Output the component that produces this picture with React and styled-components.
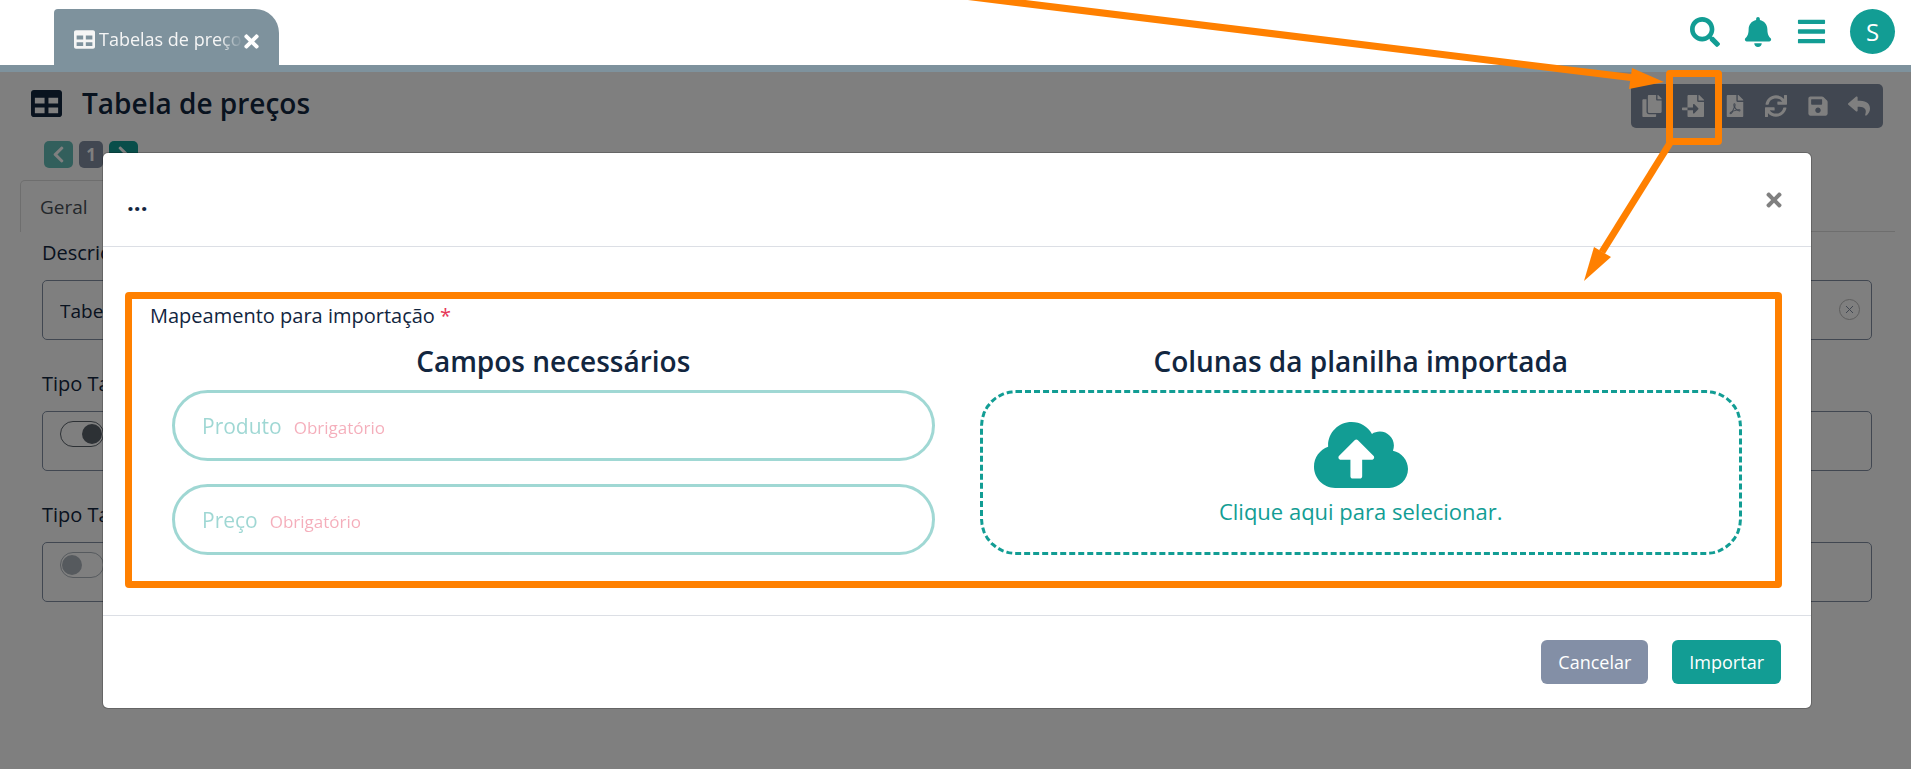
import React from "react";
import styled, { createGlobalStyle } from "styled-components";
import {
  FaTable, FaSearch, FaBell, FaBars, FaCopy, FaFileImport, FaFilePdf,
  FaSync, FaSave, FaReply, FaCloudUploadAlt, FaTimes, FaChevronLeft, FaChevronRight,
} from "react-icons/fa";

const teal = "#129d94";
const slate = "#838fa6";
const ink = "#12263f";
const bar = "#7e929d";
const orange = "#ff8000";

const GlobalStyle = createGlobalStyle`
  * { box-sizing: border-box; }
  body {
    margin: 0;
    background: #fff;
    color: ${ink};
    font-family: "Open Sans", "Noto Sans", sans-serif;
    font-size: 19px;
  }
  h1, h2, p { margin: 0; }
  button, input { font: inherit; color: inherit; }
  button { border: 0; padding: 0; background: none; cursor: pointer; }
  svg { display: block; }
`;

const Page = styled.div`
  position: relative;
  min-height: 100vh;
  display: flex;
  flex-direction: column;
  overflow: hidden;
`;

const Header = styled.header`
  display: flex;
  align-items: flex-end;
  justify-content: space-between;
  height: 72px;
  padding: 0 16px 0 54px;
  border-bottom: 7px solid ${bar};
`;

const WindowTab = styled.div`
  display: flex;
  align-items: center;
  width: 225px;
  height: 56px;
  padding: 4px 17px 0 20px;
  border-radius: 4px 24px 0 0;
  background: ${bar};
  color: #f5f5f5;
`;

const TabName = styled.span`
  flex: 1;
  min-width: 0;
  margin-left: 4px;
  overflow: hidden;
  white-space: nowrap;
  font-size: 18px;
  line-height: 28px;
  mask-image: linear-gradient(to right, #000 120px, transparent 144px);
`;

const TabClose = styled.button`
  margin-top: 4px;
  color: #fff;
`;

const HeaderActions = styled.div`
  display: flex;
  align-items: center;
  gap: 23px;
  height: 45px;
  margin-bottom: 11px;
`;

const HeaderIcon = styled.button`
  color: ${teal};

  svg {
    width: auto;
  }
`;

const Avatar = styled.button`
  width: 45px;
  height: 45px;
  border-radius: 50%;
  background: ${teal};
  color: #fff;
  font-size: 24px;
`;

const Main = styled.main`
  position: relative;
  flex: 1;
  padding: 12px 16px 32px 20px;
`;

const TitleRow = styled.div`
  display: flex;
  align-items: flex-start;
  justify-content: space-between;
  padding: 0 12px 0 11px;
`;

const PageTitle = styled.h1`
  display: flex;
  align-items: center;
  gap: 20px;
  font-size: 28px;
  line-height: 38px;
  font-weight: 600;
`;

const Toolbar = styled.div`
  display: flex;
  width: 252px;
  height: 44px;
  padding-right: 3px;
  border-radius: 5px;
  background: #828fa3;
`;

const Tool = styled.button`
  flex: 1;
  display: flex;
  align-items: center;
  justify-content: center;
  color: #fff;
`;

const Pager = styled.nav`
  display: flex;
  gap: 6px;
  margin: 13px 0 12px 24px;
`;

const PagerButton = styled.button`
  display: flex;
  align-items: center;
  justify-content: center;
  width: ${(p) => (p.$current ? 24 : 29)}px;
  height: 27px;
  border-radius: 5px;
  background: ${(p) => (p.$current ? "#828fa3" : teal)};
  color: #fff;
  font-size: 17px;
  font-weight: 700;
  opacity: ${(p) => (p.disabled ? 0.65 : 1)};
`;

const Tabs = styled.div`
  display: flex;
  height: 52px;

  &::after {
    content: "";
    flex: 1;
    border-bottom: 1px solid #ddd;
  }
`;

const FormTab = styled.button`
  padding: 0 19px;
  border: 1px solid #ddd;
  border-bottom: 0;
  border-radius: 5px 5px 0 0;
  color: #495057;
`;

const Form = styled.form`
  display: grid;
  gap: 29px;
  padding: 6px 23px 0 22px;
`;

const Field = styled.div`
  display: grid;
  gap: 12px;
`;

const FieldLabel = styled.label`
  font-size: 20px;
  line-height: 30px;
`;

const FieldBox = styled.div`
  display: flex;
  align-items: flex-start;
  height: 60px;
  padding: 9px 11px 0 17px;
  border: 1px solid #828fa3;
  border-radius: 5px;
`;

const TextInput = styled.input`
  flex: 1;
  height: 42px;
  padding: 0;
  border: 0;
  outline: 0;
  background: none;
`;

const ClearButton = styled.button`
  display: flex;
  align-items: center;
  justify-content: center;
  width: 21px;
  height: 21px;
  margin-top: 9px;
  border: 1px solid #bbb;
  border-radius: 50%;
  color: #828fa3;
`;

const ClearMark = styled.svg`
  width: 7px;
  height: 7px;
  stroke: currentColor;
`;

const Switch = styled.input`
  appearance: none;
  display: flex;
  align-items: center;
  justify-content: ${(p) => (p.defaultChecked ? "flex-end" : "flex-start")};
  width: 44px;
  height: 26px;
  margin: 0;
  padding: 0 1px;
  border: 1px solid ${(p) => (p.defaultChecked ? "#5a626b" : "#adb5bd")};
  border-radius: 13px;

  &::before {
    content: "";
    width: 20px;
    height: 20px;
    border-radius: 50%;
    background: ${(p) => (p.defaultChecked ? "#5a626b" : "#adb5bd")};
  }
`;

const Overlay = styled.div`
  position: absolute;
  inset: 0;
  padding: 80px 99px 0 102px;
  background: rgba(0, 0, 0, 0.5);
`;

const Modal = styled.section`
  border: 1px solid rgba(0, 0, 0, 0.2);
  border-radius: 6px;
  background: #fff;
  background-clip: padding-box;
`;

const ModalHeader = styled.div`
  display: flex;
  align-items: center;
  justify-content: space-between;
  height: 94px;
  padding: 0 26px 0 24px;
  border-bottom: 1px solid #dcdfe5;
`;

const ModalTitle = styled.h2`
  padding-top: 4px;
  font-size: 24px;
  line-height: 32px;
  font-weight: 700;
`;

const CloseButton = styled.button`
  color: #808080;
`;

const ModalBody = styled.div`
  padding: 45px 29px 27px 22px;
`;

const Mapping = styled.div`
  padding: 2px 33px 26px 40px;
  border: 7px solid ${orange};
  border-radius: 4px;
`;

const MappingLabel = styled.p`
  margin-left: -22px;
  font-size: 20px;
  line-height: 30px;
`;

const Required = styled.span`
  color: #e63757;
`;

const Columns = styled.div`
  display: grid;
  grid-template-columns: 1fr 1fr;
  gap: 45px;
  margin-top: 12px;
`;

const Column = styled.div`
  display: flex;
  flex-direction: column;
`;

const ColumnTitle = styled.h2`
  margin-bottom: 11px;
  font-size: 28px;
  line-height: 36px;
  font-weight: 600;
  text-align: center;
`;

const PillList = styled.div`
  display: grid;
  gap: 23px;
`;

const Pill = styled.div`
  display: flex;
  align-items: baseline;
  gap: 12px;
  height: 71px;
  padding: 18px 27px 16px;
  border: 3px solid ${teal};
  border-radius: 36px;
  color: ${teal};
  font-size: 21px;
  line-height: 30px;
  opacity: 0.4;
`;

const PillNote = styled.span`
  color: #e63757;
  font-size: 17px;
`;

const DropZone = styled.button`
  flex: 1;
  display: flex;
  flex-direction: column;
  align-items: center;
  justify-content: center;
  padding-bottom: 12px;
  border: 3px dashed ${teal};
  border-radius: 36px;
  color: ${teal};
  font-size: 22px;
  line-height: 30px;

  svg {
    margin-bottom: -6px;
  }
`;

const ModalFooter = styled.div`
  display: flex;
  justify-content: flex-end;
  gap: 24px;
  padding: 24px 30px 24px 24px;
  border-top: 1px solid #dcdfe5;
`;

const ActionButton = styled.button`
  height: 44px;
  padding: 0 17px;
  border-radius: 6px;
  background: ${(p) => (p.$primary ? teal : slate)};
  color: #fff;
  font-size: 18px;
`;

const Arrows = styled.svg`
  position: absolute;
  top: 0;
  right: 0;
  pointer-events: none;
`;

const Callout = styled.div`
  position: absolute;
  top: 70px;
  right: 189px;
  width: 56px;
  height: 75px;
  border: 7px solid ${orange};
  border-radius: 4px;
  pointer-events: none;
`;

const tools = [
  ["Copiar", FaCopy],
  ["Importar planilha", FaFileImport],
  ["Gerar PDF", FaFilePdf],
  ["Atualizar", FaSync],
  ["Salvar", FaSave],
  ["Voltar", FaReply],
];

const requiredFields = ["Produto", "Preço"];

export default function App() {
  return (
    <Page>
      <GlobalStyle />
      <Header>
        <WindowTab>
          <FaTable size={21} />
          <TabName>Tabelas de preços</TabName>
          <TabClose aria-label="Fechar aba"><FaTimes size={21} /></TabClose>
        </WindowTab>
        <HeaderActions>
          <HeaderIcon aria-label="Buscar"><FaSearch size={30} /></HeaderIcon>
          <HeaderIcon aria-label="Notificações"><FaBell size={30} /></HeaderIcon>
          <HeaderIcon aria-label="Menu"><FaBars size={31} /></HeaderIcon>
          <Avatar aria-label="Perfil">S</Avatar>
        </HeaderActions>
      </Header>

      <Main>
        <TitleRow>
          <PageTitle><FaTable size={31} />Tabela de preços</PageTitle>
          <Toolbar>
            {tools.map(([name, Icon]) => (
              <Tool key={name} aria-label={name}><Icon size={22} /></Tool>
            ))}
          </Toolbar>
        </TitleRow>
        <Pager aria-label="Páginas">
          <PagerButton disabled aria-label="Anterior"><FaChevronLeft size={19} /></PagerButton>
          <PagerButton $current>1</PagerButton>
          <PagerButton aria-label="Próxima"><FaChevronRight size={19} /></PagerButton>
        </Pager>
        <Tabs><FormTab>Geral</FormTab></Tabs>
        <Form>
          <Field>
            <FieldLabel htmlFor="descricao">Descrição</FieldLabel>
            <FieldBox>
              <TextInput id="descricao" defaultValue="Tabela" />
              <ClearButton type="button" aria-label="Limpar">
                <ClearMark viewBox="0 0 7 7"><path d="M0 0 L7 7 M7 0 L0 7" /></ClearMark>
              </ClearButton>
            </FieldBox>
          </Field>
          <Field>
            <FieldLabel htmlFor="tipo-venda">Tipo Tabela</FieldLabel>
            <FieldBox><Switch id="tipo-venda" type="checkbox" defaultChecked /></FieldBox>
          </Field>
          <Field>
            <FieldLabel htmlFor="tipo-compra">Tipo Tabela</FieldLabel>
            <FieldBox><Switch id="tipo-compra" type="checkbox" /></FieldBox>
          </Field>
        </Form>

        <Overlay>
          <Modal role="dialog" aria-modal="true" aria-labelledby="modal-title">
            <ModalHeader>
              <ModalTitle id="modal-title">...</ModalTitle>
              <CloseButton aria-label="Fechar"><FaTimes size={22} /></CloseButton>
            </ModalHeader>
            <ModalBody>
              <Mapping>
                <MappingLabel>Mapeamento para importação <Required>*</Required></MappingLabel>
                <Columns>
                  <Column>
                    <ColumnTitle>Campos necessários</ColumnTitle>
                    <PillList>
                      {requiredFields.map((name) => (
                        <Pill key={name}>{name}<PillNote>Obrigatório</PillNote></Pill>
                      ))}
                    </PillList>
                  </Column>
                  <Column>
                    <ColumnTitle>Colunas da planilha importada</ColumnTitle>
                    <DropZone>
                      <FaCloudUploadAlt size={94} />
                      Clique aqui para selecionar.
                    </DropZone>
                  </Column>
                </Columns>
              </Mapping>
            </ModalBody>
            <ModalFooter>
              <ActionButton>Cancelar</ActionButton>
              <ActionButton $primary>Importar</ActionButton>
            </ModalFooter>
          </Modal>
        </Overlay>
      </Main>

      <Callout />
      <Arrows width="960" height="300" viewBox="0 0 960 300" fill={orange} stroke="none" aria-hidden="true">
        <path d="M13 -4 L684 78" stroke={orange} strokeWidth="7" />
        <path d="M681 68 L713 82 L678 89 Z" />
        <path d="M719 143 L651 252" stroke={orange} strokeWidth="7" />
        <path d="M643 247 L660 257 L633 281 Z" />
      </Arrows>
    </Page>
  );
}
